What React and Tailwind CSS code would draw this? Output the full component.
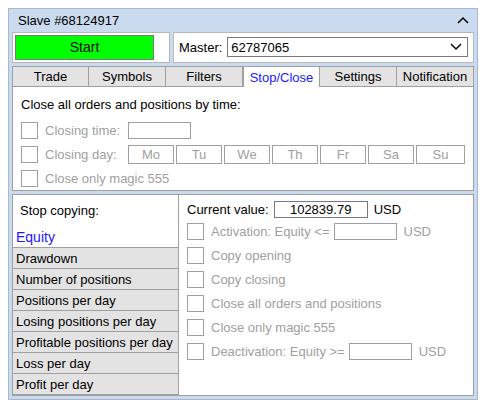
import React from 'react'

const days = ['Mo', 'Tu', 'We', 'Th', 'Fr', 'Sa', 'Su']
const tabs = ['Trade', 'Symbols', 'Filters', 'Stop/Close', 'Settings', 'Notification']
const items = [
  'Drawdown',
  'Number of positions',
  'Positions per day',
  'Losing positions per day',
  'Profitable positions per day',
  'Loss per day',
  'Profit per day',
]

const Box = () => (
  <div className="w-[17px] h-[17px] border border-[#a0a0a0] bg-white shrink-0" />
)

const Row = ({ children }) => (
  <div className="flex items-center gap-[7px] h-[24px] text-[#a0a0a0]">
    <Box />
    {children}
  </div>
)

const App = () => {
  return (
    <div
      className="w-[486px] h-[405px] bg-white pt-[8px] pl-[8px] text-[13px] text-black leading-none"
      style={{ fontFamily: '"Liberation Sans", Arial, sans-serif' }}
    >
      <div className="w-[470px] h-[392px] border border-[#a9b8cc] bg-[#cadaef] px-[3px] pb-[3px] flex flex-col">
        {/* header */}
        <div className="h-[24px] flex items-center justify-between pl-[6px] pr-[4px]">
          <span>Slave #68124917</span>
          <svg width="12" height="8" viewBox="0 0 12 8" className="mr-[1px]">
            <path d="M1 7 L6 2 L11 7" stroke="#000" strokeWidth="1.5" fill="none" />
          </svg>
        </div>

        {/* start / master */}
        <div className="flex gap-[3px] h-[33px]">
          <div className="w-[158px] bg-white border border-[#b8b8b8] p-[2px] pr-[15px]">
            <div className="h-full bg-[#00ff00] border border-[#7a7a7a] flex items-center justify-center text-[14px] text-[#0a0a0a]">
              Start
            </div>
          </div>
          <div className="flex-1 bg-white border border-[#b8b8b8] flex items-center pl-[5px] pr-[5px] gap-[5px]">
            <span>Master:</span>
            <div className="flex-1 h-[20px] border border-[#7a7a7a] flex items-center justify-between pl-[3px] pr-[5px]">
              <span>62787065</span>
              <svg width="12" height="8" viewBox="0 0 12 8">
                <path d="M1 1 L6 6 L11 1" stroke="#000" strokeWidth="1.5" fill="none" />
              </svg>
            </div>
          </div>
        </div>

        {/* tabs */}
        <div className="mt-[3px] grid grid-cols-6 h-[22px]">
          {tabs.map((t) => {
            const active = t === 'Stop/Close'
            return (
              <div
                key={t}
                className={
                  active
                    ? 'bg-white border border-b-0 border-[#a0a0a0] flex items-center justify-center text-[#1a1aff]'
                    : 'bg-[#e3e3e3] border border-[#a0a0a0] -ml-px first:ml-0 flex items-center justify-center'
                }
              >
                {t}
              </div>
            )
          })}
        </div>

        {/* close by time */}
        <div className="h-[104px] bg-white border border-t-0 border-[#a0a0a0] pl-[8px] pt-[11px]">
          <div className="h-[14px]">Close all orders and positions by time:</div>
          <div className="mt-[6px] flex flex-col">
            <Row>
              <span className="w-[76px]">Closing time:</span>
              <div className="w-[63px] h-[17px] border border-[#a0a0a0]" />
            </Row>
            <Row>
              <span className="w-[76px]">Closing day:</span>
              <div className="flex gap-[2px]">
                {days.map((d) => (
                  <div
                    key={d}
                    className={`${d === 'Su' ? 'w-[49px]' : 'w-[46px]'} h-[19px] border border-[#a0a0a0] flex items-center justify-center`}
                  >
                    {d}
                  </div>
                ))}
              </div>
            </Row>
            <Row>
              <span>Close only magic 555</span>
            </Row>
          </div>
        </div>

        {/* stop copying */}
        <div className="mt-[3px] flex-1 bg-white border border-[#a0a0a0] flex">
          <div className="w-[166px] border-r border-[#a0a0a0] flex flex-col">
            <div className="h-[31px] flex items-center pl-[7px]">Stop copying:</div>
            <div className="h-[21px] flex items-center pl-[3px] text-[#1a1aff] text-[14px]">Equity</div>
            {items.map((it) => (
              <div
                key={it}
                className="h-[21px] flex items-center pl-[3px] bg-[#e3e3e3] border-t border-[#a0a0a0]"
              >
                {it}
              </div>
            ))}
            <div className="flex-1 bg-[#e3e3e3] border-t border-[#a0a0a0]" />
          </div>

          <div className="flex-1 pl-[8px] pt-[6px]">
            <div className="flex items-center h-[17px] gap-[5px]">
              <span>Current value:</span>
              <div className="w-[94px] h-[17px] border border-[#7a7a7a] flex items-center justify-center">
                102839.79
              </div>
              <span className="ml-[1px]">USD</span>
            </div>
            <div className="mt-[1px] flex flex-col">
              <Row>
                <span>Activation: Equity &lt;=</span>
                <div className="-ml-[3px] w-[63px] h-[17px] border border-[#a0a0a0]" />
                <span>USD</span>
              </Row>
              <Row>
                <span>Copy opening</span>
              </Row>
              <Row>
                <span>Copy closing</span>
              </Row>
              <Row>
                <span>Close all orders and positions</span>
              </Row>
              <Row>
                <span>Close only magic 555</span>
              </Row>
              <Row>
                <span>Deactivation: Equity &gt;=</span>
                <div className="-ml-[3px] w-[63px] h-[17px] border border-[#a0a0a0]" />
                <span>USD</span>
              </Row>
            </div>
          </div>
        </div>
      </div>
    </div>
  )
}

export default App
